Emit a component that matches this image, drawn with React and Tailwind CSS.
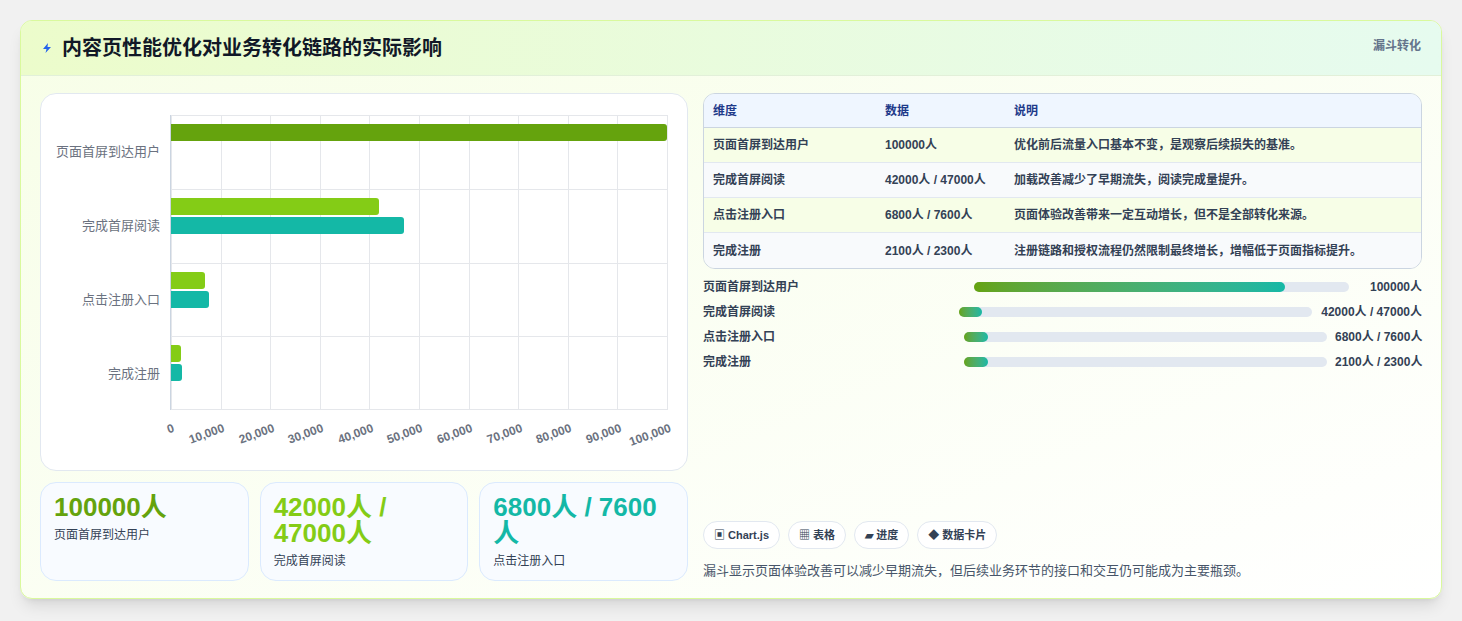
import React from 'react'

const cats = [
  { label: '页面首屏到达用户', bars: [{ v: 100000, c: 'bg-[#65a30d]' }] },
  { label: '完成首屏阅读', bars: [{ v: 42000, c: 'bg-[#84cc16]' }, { v: 47000, c: 'bg-[#14b8a6]' }] },
  { label: '点击注册入口', bars: [{ v: 6800, c: 'bg-[#84cc16]' }, { v: 7600, c: 'bg-[#14b8a6]' }] },
  { label: '完成注册', bars: [{ v: 2100, c: 'bg-[#84cc16]' }, { v: 2300, c: 'bg-[#14b8a6]' }] },
]

const ticks = ['0', '10,000', '20,000', '30,000', '40,000', '50,000', '60,000', '70,000', '80,000', '90,000', '100,000']

const rows = [
  ['页面首屏到达用户', '100000人', '优化前后流量入口基本不变，是观察后续损失的基准。'],
  ['完成首屏阅读', '42000人 / 47000人', '加载改善减少了早期流失，阅读完成量提升。'],
  ['点击注册入口', '6800人 / 7600人', '页面体验改善带来一定互动增长，但不是全部转化来源。'],
  ['完成注册', '2100人 / 2300人', '注册链路和授权流程仍然限制最终增长，增幅低于页面指标提升。'],
]

function Chart() {
  return (
    <div className="relative h-[378px] rounded-2xl border border-[#e2e8f0] bg-white">
      <div className="absolute left-[129px] top-[21px] w-[497px] h-[295px] border-l border-[#cbd5e1]">
        {ticks.map((t, i) => (
          <div key={i} className="absolute top-0 bottom-0 border-l border-[#e5e7eb]" style={{ left: `${i * 10}%` }} />
        ))}
        {cats.map((c, i) => (
          <div key={i} className="absolute left-0 right-0 border-t border-[#e5e7eb]" style={{ top: `${i * 25}%`, height: '25%' }}>
            <div className="absolute right-[calc(100%+11px)] top-1/2 -translate-y-1/2 whitespace-nowrap text-[13px] text-[#6b7280]">{c.label}</div>
            <div className="absolute left-0 right-0 top-[8px] flex flex-col gap-[2px]">
              {c.bars.map((b, j) => (
                <div key={j} className={`h-[17px] rounded-r-[3px] ${b.c}`} style={{ width: `${b.v / 1000}%` }} />
              ))}
            </div>
          </div>
        ))}
        <div className="absolute left-0 right-0 bottom-0 border-t border-[#e5e7eb]" />
        {ticks.map((t, i) => (
          <div key={'t' + i} className="absolute top-[304px] whitespace-nowrap text-[12px] font-bold text-[#6b7280] origin-top-right -rotate-[20deg]" style={{ right: `${100 - i * 10}%` }}>{t}</div>
        ))}
      </div>
    </div>
  )
}

function Stat({ value, label, color }) {
  return (
    <div className="h-[99px] rounded-2xl border border-[#dbeafe] bg-[#f8fbff] px-[13px] pt-[11px]">
      <div className={`text-[26px] font-bold leading-[26px] ${color}`}>{value}</div>
      <div className="mt-[6px] text-[12px] text-[#334155]">{label}</div>
    </div>
  )
}

const progress = [
  { l: '页面首屏到达用户', v: '100000人', cols: 'grid-cols-[271px_375px_1fr]', w: 'w-[83%]' },
  { l: '完成首屏阅读', v: '42000人 / 47000人', cols: 'grid-cols-[256px_353px_1fr]', w: 'w-[23px]' },
  { l: '点击注册入口', v: '6800人 / 7600人', cols: 'grid-cols-[261px_363px_1fr]', w: 'w-[24px]' },
  { l: '完成注册', v: '2100人 / 2300人', cols: 'grid-cols-[261px_363px_1fr]', w: 'w-[24px]' },
]

export default function App() {
  return (
    <div className="min-h-[621px] bg-[#f1f1f1] pt-[20px] px-[20px]" style={{ fontFamily: '"Liberation Sans", "Noto Sans CJK SC", sans-serif' }}>
      <div className="w-[1422px] h-[579px] overflow-hidden rounded-xl border border-[#d9f99d] bg-gradient-to-br from-[#f7fee7] to-white shadow-lg">
        <div className="h-[55px] flex items-center justify-between px-[20px] border-b border-[#e2f0d9] bg-gradient-to-r from-[#ecfccb] to-[#e6fbef]">
          <div className="flex items-center gap-[9px]">
            <svg width="12" height="12" viewBox="0 0 12 12"><path d="M7 1 L2 7 H5.5 L4.5 11 L10 5 H6.5 Z" fill="#2563eb" /></svg>
            <h1 className="text-[20px] font-bold text-[#111827]">内容页性能优化对业务转化链路的实际影响</h1>
          </div>
          <span className="self-start mt-[16px] text-[12px] font-bold text-[#64748b]">漏斗转化</span>
        </div>
        <div className="flex gap-[15px] px-[19px] pt-[17px]">
          <div className="w-[650px] flex flex-col gap-[11px]">
            <Chart />
            <div className="grid grid-cols-3 gap-[11px]">
              <Stat value="100000人" label="页面首屏到达用户" color="text-[#65a30d]" />
              <Stat value="42000人 / 47000人" label="完成首屏阅读" color="text-[#84cc16]" />
              <Stat value="6800人 / 7600人" label="点击注册入口" color="text-[#14b8a6]" />
            </div>
          </div>
          <div className="w-[719px] flex flex-col">
            <div className="overflow-hidden rounded-xl border border-[#cbd5e1] text-[12px]">
              <div className="grid grid-cols-[172px_129px_1fr] h-[34px] items-center bg-[#eff6ff] border-b border-[#cbd5e1] px-[9px] font-bold text-[#1e3a8a]">
                <span>维度</span><span>数据</span><span>说明</span>
              </div>
              {rows.map((r, i) => (
                <div key={i} className={`grid grid-cols-[172px_129px_1fr] h-[35px] items-center px-[9px] font-bold text-[#334155] ${i < 3 ? 'border-b border-[#e2e8f0]' : ''} ${i % 2 ? 'bg-[#f8fafc]' : 'bg-[#f7fee7]'}`}>
                  <span>{r[0]}</span><span>{r[1]}</span><span>{r[2]}</span>
                </div>
              ))}
            </div>
            <div className="mt-[9px] flex flex-col gap-[7px] text-[12px] font-bold text-[#334155]">
              {progress.map((p, i) => (
                <div key={i} className={`grid ${p.cols} items-center h-[18px]`}>
                  <span className="whitespace-nowrap">{p.l}</span>
                  <div className="h-[10px] rounded-full bg-[#e2e8f0]">
                    <div className={`h-full rounded-full bg-gradient-to-r from-[#65a30d] to-[#14b8a6] ${p.w}`} />
                  </div>
                  <span className="whitespace-nowrap pl-[8px] text-right">{p.v}</span>
                </div>
              ))}
            </div>
            <div className="mt-auto flex gap-[8px] text-[11px] font-bold text-[#334155]">
              {['▣ Chart.js', '▦ 表格', '▰ 进度', '◆ 数据卡片'].map(t => (
                <span key={t} className="h-[28px] flex items-center rounded-full border border-[#e2e8f0] bg-white px-[10px]">{t}</span>
              ))}
            </div>
            <p className="mt-[12px] text-[13px] leading-[20px] text-[#475569]">漏斗显示页面体验改善可以减少早期流失，但后续业务环节的接口和交互仍可能成为主要瓶颈。</p>
          </div>
        </div>
      </div>
    </div>
  )
}
